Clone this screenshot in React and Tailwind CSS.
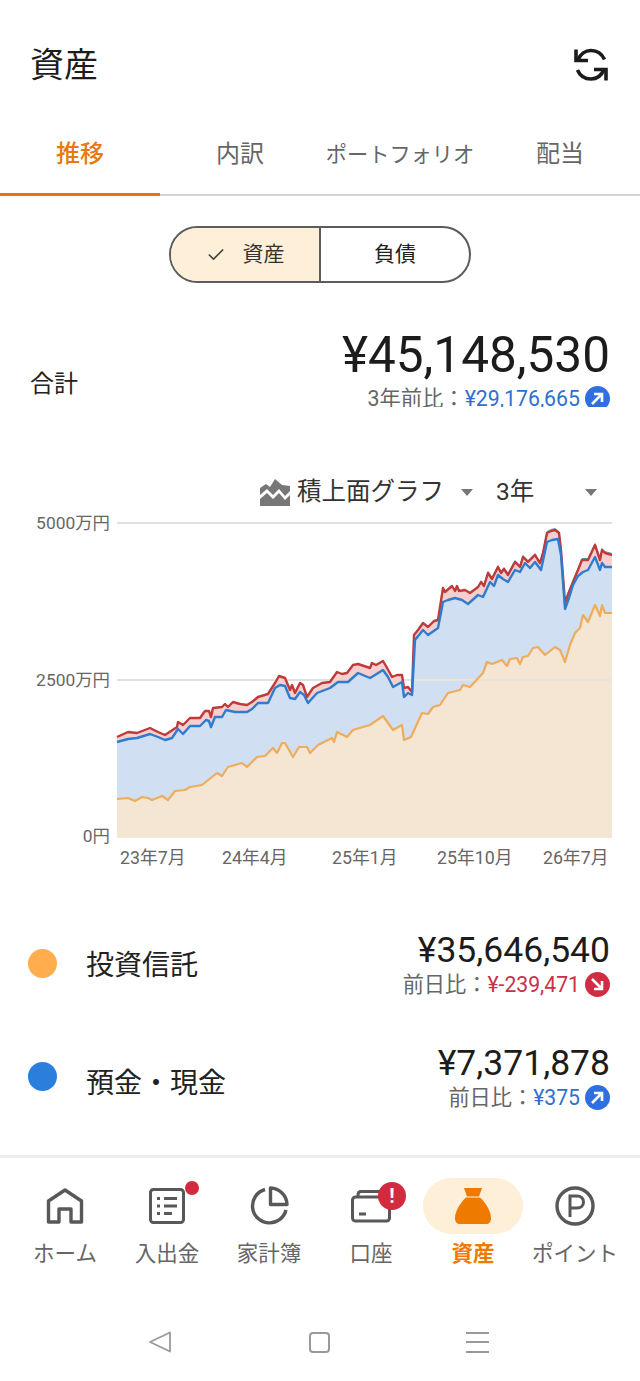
import { Check } from "lucide-react";

const RED = [[117,737],[128,732],[137,733],[150,728],[158,732],[165,735],[177,727],[178,722],[183,725],[190,718],[200,718],[205,711],[209,711],[211,717],[213,708],[222,707],[225,704],[228,707],[233,702],[240,704],[247,705],[252,702],[258,697],[268,694],[275,683],[279,676],[285,678],[290,690],[292,685],[295,693],[300,683],[303,685],[307,697],[313,688],[322,683],[330,682],[337,672],[342,674],[347,673],[353,665],[358,664],[370,668],[372,663],[376,665],[383,661],[386,666],[392,677],[397,675],[402,675],[404,688],[408,687],[412,692],[414,635],[418,630],[423,623],[428,627],[434,621],[438,620],[443,588],[445,592],[452,586],[455,591],[457,586],[459,591],[465,590],[470,593],[478,587],[481,582],[484,586],[488,573],[492,579],[498,567],[501,573],[504,569],[508,575],[515,562],[520,567],[523,557],[528,562],[535,555],[538,560],[540,563],[543,553],[547,533],[551,531],[555,530],[559,533],[561,550],[565,603],[569,592],[573,582],[578,570],[582,560],[588,560],[595,545],[600,560],[602,550],[605,553],[612,555]];
const BLUE = [[117,742],[128,739],[137,738],[150,734],[158,737],[165,740],[172,738],[178,729],[183,734],[190,726],[200,726],[206,720],[209,721],[211,727],[215,717],[222,717],[226,710],[235,712],[247,712],[252,709],[258,703],[268,703],[275,688],[280,685],[285,686],[290,698],[295,699],[300,692],[304,695],[308,703],[317,693],[330,688],[338,682],[348,682],[358,673],[370,678],[375,675],[383,670],[388,677],[393,687],[402,682],[404,697],[408,693],[412,695],[415,640],[423,630],[428,635],[438,628],[443,602],[448,600],[455,598],[462,600],[468,604],[478,595],[483,597],[490,582],[494,586],[498,575],[503,579],[508,582],[515,570],[520,572],[525,563],[530,568],[535,562],[541,570],[547,542],[552,540],[558,539],[561,555],[565,609],[569,598],[573,585],[578,576],[583,572],[588,570],[595,557],[600,570],[602,563],[605,567],[612,567]];
const ORANGE = [[117,799],[128,798],[135,801],[142,797],[148,798],[152,800],[162,796],[168,800],[175,791],[185,790],[190,787],[202,785],[217,773],[222,776],[228,767],[242,763],[247,767],[257,757],[265,756],[273,748],[277,753],[282,743],[285,743],[293,757],[299,747],[307,747],[310,753],[318,745],[332,738],[334,742],[337,732],[347,737],[353,730],[363,727],[370,725],[383,716],[393,730],[402,725],[404,740],[411,737],[422,713],[428,714],[433,707],[440,705],[448,693],[460,690],[463,685],[470,687],[483,673],[487,662],[492,664],[502,660],[507,666],[510,659],[517,658],[520,664],[523,657],[528,656],[533,648],[538,647],[545,655],[555,647],[560,650],[565,662],[570,645],[575,633],[580,628],[583,615],[588,622],[595,605],[600,616],[602,605],[605,613],[612,613]];

const pts = (a) => a.map((p) => p.join(",")).join(" ");
const reversed = (a) => [...a].reverse();

const Y_LABELS = [
  { text: "5000万円", cls: "top-[2px]" },
  { text: "2500万円", cls: "top-[159px]" },
  { text: "0円", cls: "top-[315px]" },
];

const X_LABELS = [
  { text: "23年7月", cls: "left-[120px]" },
  { text: "24年4月", cls: "left-[222px]" },
  { text: "25年1月", cls: "left-[332px]" },
  { text: "25年10月", cls: "left-[437px]" },
  { text: "26年7月", cls: "left-[543px]" },
];

const Refresh = () => (
  <svg width="34" height="34" viewBox="0 0 34 34" fill="none" stroke="#1c1c1c" strokeWidth="3.6">
    <path d="M2 1.500V12.500H14" />
    <path d="M4 12C6.500 6 11.500 2.500 17 2.500C23 2.500 28 6 30.500 11.500" />
    <path d="M3.500 22C6 28 11 31 17 31C22.500 31 27.500 27.500 30 21.500" />
    <path d="M32 32.500V21.500H20" />
  </svg>
);

const Trend = ({ down }) => (
  <span className={`flex h-[25px] w-[25px] shrink-0 items-center justify-center rounded-full ${down ? "bg-[#d02c44]" : "bg-[#2f6fe0]"}`}>
    <svg width="15" height="15" viewBox="0 0 15 15" fill="none" stroke="#fff" strokeWidth="2.600">
      {down ? <path d="M2 2L12 12M12 4V12H4" /> : <path d="M2 13L12 3M4 3H12V11" />}
    </svg>
  </span>
);

const Caret = () => (
  <svg width="14" height="9" viewBox="0 0 14 9" fill="#777">
    <path d="M1 1H13L7 8Z" />
  </svg>
);

const HomeIcon = () => (
  <svg width="38" height="38" viewBox="0 0 38 38" fill="none" stroke="#595757" strokeWidth="3.400">
    <path d="M2.500 35V14L19 3L35.500 14V35H25V22H13V35Z" strokeLinejoin="round" />
  </svg>
);

const ListIcon = () => (
  <svg width="38" height="38" viewBox="0 0 38 38" fill="none" stroke="#595757" strokeWidth="3">
    <rect x="2.500" y="2.500" width="33" height="33" rx="3" />
    <path d="M9 11.500H12M9 19H12M9 26.500H12M16 11.500H29M16 19H29M16 26.500H24" />
  </svg>
);

const PieIcon = () => (
  <svg width="40" height="40" viewBox="0 0 40 40" fill="none" stroke="#595757" strokeWidth="3.400">
    <path d="M16 3.500A17 17 0 1 0 37 24" />
    <path d="M21.500 2A17 17 0 0 1 38 18.500H21.500Z" strokeLinejoin="round" />
  </svg>
);

const CardIcon = () => (
  <svg width="40" height="36" viewBox="0 0 40 36" fill="none" stroke="#595757" strokeWidth="3">
    <rect x="1.500" y="9" width="37" height="24" rx="3" />
    <path d="M7 9V7C7 5 8 3.500 10 3.500H32M8 26H15" />
  </svg>
);

const BagIcon = () => (
  <svg width="38" height="38" viewBox="0 0 38 38" fill="#ef7a00">
    <path d="M10 1H28L25 9.500H13Z" />
    <path d="M12 10.500H26C30 14 37 23 37 31C37 35 35 37 32 37H6C3 37 1 35 1 31C1 23 8 14 12 10.500Z" />
  </svg>
);

const PointIcon = () => (
  <svg width="40" height="40" viewBox="0 0 40 40" fill="none" stroke="#595757">
    <circle cx="20" cy="20" r="18" strokeWidth="3.400" />
    <path d="M15 31V10H22C26 10 28.500 12.500 28.500 16C28.500 19.500 26 22 22 22H15" strokeWidth="3" />
  </svg>
);

const NAV = [
  { label: "ホーム", icon: HomeIcon },
  { label: "入出金", icon: ListIcon, dot: true },
  { label: "家計簿", icon: PieIcon },
  { label: "口座", icon: CardIcon, alert: true },
  { label: "資産", icon: BagIcon, active: true },
  { label: "ポイント", icon: PointIcon },
];

const NavItem = ({ label, icon: Icon, dot, alert, active }) => (
  <div className="flex w-[102px] flex-col items-center">
    <div className={`relative flex h-[56px] w-[100px] items-center justify-center rounded-full ${active ? "bg-[#fdefd8]" : ""}`}>
      <Icon />
      {dot && <span className="absolute right-[18px] top-[3px] h-[14px] w-[14px] rounded-full bg-[#d22a3f]" />}
      {alert && (
        <span className="absolute right-[15px] top-[4px] flex h-[28px] w-[28px] items-center justify-center rounded-full bg-[#d22a3f] text-[20px] font-bold leading-none text-white">
          !
        </span>
      )}
    </div>
    <span className={`mt-[6px] whitespace-nowrap text-[21.500px] leading-[28px] ${active ? "font-bold text-[#ef7a00]" : "text-[#666]"}`}>
      {label}
    </span>
  </div>
);

const LegendRow = ({ color, label, labelClass, value, prefix, diff, down, className }) => (
  <div className={`flex items-center justify-between pl-[28px] pr-[30px] ${className}`}>
    <div className="flex items-center">
      <span className={`h-[29px] w-[29px] rounded-full ${color}`} />
      <span className={`ml-[29px] text-[28px] leading-[36px] text-[#222] ${labelClass}`}>{label}</span>
    </div>
    <div className="flex flex-col items-end">
      <span className="text-[35.500px] leading-[40px] text-[#1c1c1c]">{value}</span>
      <div className="mt-[2px] flex items-center gap-[5px]">
        <span className="text-[21.200px] leading-[25px] text-[#666]">
          {prefix}
          <span className={down ? "text-[#c9304a]" : "text-[#2f6fd0]"}>{diff}</span>
        </span>
        <Trend down={down} />
      </div>
    </div>
  </div>
);

export default function App() {
  return (
    <div className="flex h-[1381px] w-[640px] flex-col overflow-hidden bg-white font-['Roboto','Noto_Sans_CJK_JP',sans-serif]">
      {/* Header */}
      <div className="mt-[40px] flex h-[50px] items-center justify-between pl-[30px] pr-[32px]">
        <h1 className="text-[34px] leading-[50px] text-[#1c1c1c]">資産</h1>
        <Refresh />
      </div>

      {/* Tabs */}
      <div className="mt-[26px] grid h-[80px] grid-cols-4 border-b-2 border-[#d4d4d4]">
        <div className="-mb-[2px] flex items-center justify-center border-b-[3px] border-[#e2780c] pb-[2px] text-[24px] font-medium text-[#e8790c]">推移</div>
        <div className="flex items-center justify-center pb-[2px] text-[24px] text-[#666]">内訳</div>
        <div className="flex items-center justify-center whitespace-nowrap text-[21.200px] text-[#666]">ポートフォリオ</div>
        <div className="flex items-center justify-center pb-[2px] text-[24px] text-[#666]">配当</div>
      </div>

      {/* Toggle */}
      <div className="mx-auto mt-[30px] flex h-[57px] w-[302px] overflow-hidden rounded-full border-2 border-[#5c5c5c]">
        <div className="flex w-[150px] items-center justify-center gap-[17px] border-r-2 border-[#5c5c5c] bg-[#fdefd8] text-[21px] text-[#333]">
          <Check size={20} strokeWidth={2} color="#444" />
          資産
        </div>
        <div className="flex flex-1 items-center justify-center text-[21px] text-[#222]">負債</div>
      </div>

      {/* Total */}
      <div className="mt-[47px] flex items-center justify-between pl-[30px] pr-[30px]">
        <span className="mt-[31px] text-[24px] leading-[34px] text-[#222]">合計</span>
        <div className="flex flex-col items-end">
          <span className="text-[49.500px] leading-[50px] text-[#1c1c1c]">¥45,148,530</span>
          <div className="mt-[6px] flex h-[21px] items-start gap-[5px] overflow-hidden">
            <span className="text-[21.300px] leading-[25px] text-[#666]">
              3年前比：<span className="text-[#2f6fd0]">¥29,176,665</span>
            </span>
            <Trend />
          </div>
        </div>
      </div>

      {/* Chart controls */}
      <div className="mt-[70px] flex h-[30px] items-center pl-[260px]">
        <svg width="30" height="27" viewBox="0 0 30 27" fill="#777">
          <path d="M0 9L6 5L10 8L15 0L22 6L30 7V12L25 17L19 10L13 16L7 10L0 16Z" />
          <path d="M0 20L7 14L13 20L19 14L25 21L30 16V27H0Z" />
        </svg>
        <span className="ml-[7px] text-[24.500px] leading-[30px] text-[#333]">積上面グラフ</span>
        <span className="ml-[16px]"><Caret /></span>
        <span className="ml-[22px] text-[24.500px] leading-[30px] text-[#333]">3年</span>
        <span className="ml-[50px]"><Caret /></span>
      </div>

      {/* Chart */}
      <div className="relative mt-[3px] h-[360px] w-full">
        <svg className="block h-full w-full" viewBox="0 510 640 360" fill="none">
          <path d="M117 523H612M117 680H612" stroke="#e0e0e0" strokeWidth="2" />
          <polygon points={`${pts(RED)} ${pts(reversed(BLUE))}`} fill="#f6d0ce" />
          <polygon points={`${pts(BLUE)} ${pts(reversed(ORANGE))}`} fill="#d0dff2" />
          <polygon points={`${pts(ORANGE)} 612,838 117,838`} fill="#f5e6d4" />
          <path d="M405 680H612" stroke="#ebe3da" strokeWidth="2" />
          <polyline points={pts(RED.filter((p) => p[0] > 480))} transform="translate(0,-1.500)" stroke="#4aa8b8" strokeWidth="1" />
          <polyline points={pts(RED)} stroke="#c0393b" strokeWidth="2.400" strokeLinejoin="round" />
          <polyline points={pts(BLUE)} stroke="#2f7ccf" strokeWidth="2.400" strokeLinejoin="round" />
          <polyline points={pts(ORANGE)} stroke="#eeac5c" strokeWidth="2.200" strokeLinejoin="round" />
        </svg>
        {Y_LABELS.map(({ text, cls }) => (
          <span key={text} className={`absolute right-[530px] text-[17.400px] leading-[22px] text-[#666] ${cls}`}>{text}</span>
        ))}
        {X_LABELS.map(({ text, cls }) => (
          <span key={text} className={`absolute top-[337px] text-[17.800px] leading-[22px] text-[#666] ${cls}`}>{text}</span>
        ))}
      </div>

      {/* Legend */}
      <LegendRow
        className="mt-[60px]"
        color="bg-[#ffad4d]"
        label="投資信託"
        labelClass="mt-[4px]"
        value="¥35,646,540"
        prefix="前日比："
        diff="¥-239,471"
        down
      />
      <LegendRow
        className="mt-[46px]"
        color="bg-[#2b7fdc]"
        label="預金・現金"
        labelClass="mt-[14px]"
        value="¥7,371,878"
        prefix="前日比："
        diff="¥375"
      />

      {/* Bottom nav */}
      <div className="mt-auto border-t-[3px] border-[#eeeeee] bg-white pb-[27px] pt-[20px]">
        <div className="flex justify-center">
          {NAV.map((item) => (
            <NavItem key={item.label} {...item} />
          ))}
        </div>
        <div className="mt-[62px] flex h-[24px] items-center">
          <div className="flex w-[320px] justify-end pr-[148px]">
            <svg width="24" height="24" viewBox="0 0 24 24" fill="none" stroke="#999" strokeWidth="1.800" strokeLinejoin="round">
              <path d="M22 2.500V21.500L2 12Z" />
            </svg>
          </div>
          <div className="-ml-[11px] h-[21px] w-[21px] rounded-[4px] border-2 border-[#999]" />
          <div className="ml-[136px] flex h-[21px] w-[23px] flex-col justify-between">
            <span className="h-[2px] bg-[#999]" />
            <span className="h-[2px] bg-[#999]" />
            <span className="h-[2px] bg-[#999]" />
          </div>
        </div>
      </div>
    </div>
  );
}
